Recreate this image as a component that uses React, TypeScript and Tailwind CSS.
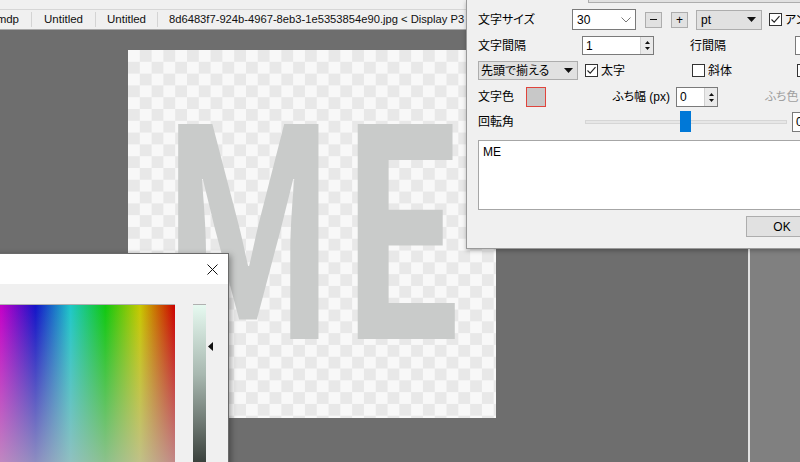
import React from "react";

const Check = ({ checked = false }: { checked?: boolean }) => (
  <div className="w-[13px] h-[13px] border border-[#333333] bg-white flex items-center justify-center shrink-0">
    {checked && (
      <svg width="11" height="11" viewBox="0 0 11 11">
        <path d="M1.5 5.5 L4.2 8.2 L9.5 2.2" fill="none" stroke="#222" strokeWidth="1.1" />
      </svg>
    )}
  </div>
);

const DownTri = () => (
  <svg width="9" height="5" viewBox="0 0 9 5" className="shrink-0">
    <polygon points="0,0 9,0 4.5,5" fill="#111" />
  </svg>
);

const Spin = ({ value, w }: { value: string; w: string }) => (
  <div className={`${w} h-full bg-white border border-[#7a7a7a] flex items-stretch shrink-0`}>
    <div className="flex-1 pl-[3px] flex items-center leading-none">{value}</div>
    <div className="w-[13px] bg-[#eaeaea] border-l border-[#d0d0d0] flex flex-col items-center justify-center gap-[3px]">
      <svg width="5" height="3" viewBox="0 0 5 3"><polygon points="0,3 5,3 2.5,0" fill="#111" /></svg>
      <svg width="5" height="3" viewBox="0 0 5 3"><polygon points="0,0 5,0 2.5,3" fill="#111" /></svg>
    </div>
  </div>
);

export default function App() {
  return (
    <div className="relative w-[800px] h-[462px] overflow-hidden bg-[#6e6e6e] text-[12px] text-black [font-family:'Liberation_Sans','Noto_Sans_CJK_JP',sans-serif] [font-feature-settings:'palt']">
      {/* top strip */}
      <div className="h-[10px] bg-[#f0f0f0] border-b border-[#d6d6d6]" />
      {/* tab bar */}
      <div className="h-[20px] bg-[#f0f0f0] border-b border-[#a9a9a9] flex items-stretch text-[11.5px] text-[#111]">
        <div className="w-[31px] shrink-0 flex items-center justify-end pr-[12px] overflow-hidden whitespace-nowrap">mdp</div>
        <div className="w-px my-[2px] bg-[#d4d4d4] shrink-0" />
        <div className="w-[63px] shrink-0 flex items-center justify-center whitespace-nowrap">Untitled</div>
        <div className="w-px my-[2px] bg-[#d4d4d4] shrink-0" />
        <div className="w-[61px] shrink-0 flex items-center justify-center whitespace-nowrap">Untitled</div>
        <div className="w-px my-[2px] bg-[#d4d4d4] shrink-0" />
        <div className="flex items-center pl-[11px] whitespace-nowrap text-[11.2px]">8d6483f7-924b-4967-8eb3-1e5353854e90.jpg &lt; Display P3</div>
      </div>

      {/* main area */}
      <div className="flex h-[432px]">
        <div className="w-[748px] shrink-0 pl-[128px] pt-[20px]">
          <div className="w-[368px] h-[368px] bg-[conic-gradient(#e8e8e8_25%,#f8f8f8_0_50%,#e8e8e8_0_75%,#f8f8f8_0)] bg-[length:23.6px_23.6px] flex items-center justify-center overflow-hidden">
            <div className="text-[290px] leading-none font-bold text-[#c9cbca] [font-family:'Noto_Sans_CJK_JP',sans-serif] scale-x-[0.72] tracking-[2px] translate-x-[2px] -translate-y-[21px] whitespace-nowrap">
              ME
            </div>
          </div>
        </div>
        <div className="w-[2px] shrink-0 bg-[#e2e2e2]" />
        <div className="flex-1 bg-[#808080]" />
      </div>

      {/* text settings dialog */}
      <div className="absolute left-[466px] top-0 w-[340px] h-[249px] bg-[#f0f0f0] border-l border-b border-[#9a9a9a] pl-[11px] shadow-[0_2px_4px_rgba(0,0,0,0.25)] whitespace-nowrap">
        <div className="h-[3px] ml-[110px] bg-[#e1e1e1] border-l border-b border-[#adadad]" />
        {/* row 1 */}
        <div className="mt-[6px] h-[21px] flex items-center">
          <div className="w-[94px] shrink-0">文字サイズ</div>
          <div className="w-[64px] h-[21px] bg-white border border-[#7a7a7a] flex items-center pl-[4px] pr-[4px] shrink-0">
            <span className="flex-1">30</span>
            <svg width="10" height="6" viewBox="0 0 10 6"><polyline points="0.5,0.5 5,5 9.5,0.5" fill="none" stroke="#777" strokeWidth="1" /></svg>
          </div>
          <div className="ml-[9px] w-[17px] h-[16px] bg-[#e1e1e1] border border-[#adadad] flex items-center justify-center shrink-0">
            <div className="w-[7px] h-px bg-[#111]" />
          </div>
          <div className="ml-[9px] w-[17px] h-[16px] bg-[#e1e1e1] border border-[#adadad] flex items-center justify-center shrink-0 leading-none text-[12px]">+</div>
          <div className="ml-[8px] w-[66px] h-[20px] bg-[#e1e1e1] border border-[#adadad] flex items-center pl-[4px] pr-[5px] shrink-0">
            <span className="flex-1">pt</span>
            <DownTri />
          </div>
          <div className="ml-[7px] shrink-0"><Check checked /></div>
          <span className="ml-[3px] shrink-0">アンチエイリアス</span>
        </div>
        {/* row 2 */}
        <div className="mt-[6px] h-[19px] flex items-center">
          <div className="w-[104px] shrink-0">文字間隔</div>
          <Spin value="1" w="w-[72px]" />
          <div className="ml-[36px] w-[105px] shrink-0">行間隔</div>
          <div className="w-[60px] h-[19px] bg-white border border-[#7a7a7a] shrink-0" />
        </div>
        {/* row 3 */}
        <div className="mt-[6px] h-[19px] flex items-center">
          <div className="w-[100px] h-[19px] bg-[#e1e1e1] border border-[#adadad] flex items-center pl-[2px] pr-[4px] shrink-0">
            <span className="flex-1">先頭で揃える</span>
            <DownTri />
          </div>
          <div className="ml-[7px] w-[107px] shrink-0 flex items-center gap-[3px]">
            <Check checked />
            <span>太字</span>
          </div>
          <div className="w-[105px] shrink-0 flex items-center gap-[3px]">
            <Check />
            <span>斜体</span>
          </div>
          <Check />
        </div>
        {/* row 4 */}
        <div className="mt-[7px] h-[20px] flex items-center">
          <div className="w-[48px] shrink-0">文字色</div>
          <div className="w-[20px] h-[20px] border border-[#e0443c] bg-[#c8c8c8] shrink-0" />
          <div className="w-[124px] shrink-0 text-right">ふち幅 (px)</div>
          <div className="ml-[6px] h-[20px] flex shrink-0"><Spin value="0" w="w-[42px]" /></div>
          <div className="ml-[47px] shrink-0 text-[#a0a0a0]">ふち色</div>
        </div>
        {/* row 5 */}
        <div className="mt-[4px] h-[22px] flex items-center">
          <div className="w-[107px] shrink-0">回転角</div>
          <div className="relative w-[202px] h-[22px] shrink-0 flex items-center">
            <div className="w-full h-[4px] bg-[#e7e7e7] border border-[#d6d6d6]" />
            <div className="absolute left-[95px] top-0 w-[11px] h-[21px] bg-[#0078d7]" />
          </div>
          <div className="ml-[5px] w-[40px] h-[20px] bg-white border border-[#7a7a7a] pl-[3px] flex items-center shrink-0">0</div>
        </div>
        {/* textarea */}
        <div className="mt-[7px] h-[70px] w-[340px] bg-white border border-[#a6a6a6] pl-[4px] pt-[3px] leading-[16px]">ME</div>
        {/* OK */}
        <div className="mt-[6px] ml-[268px] w-[72px] h-[21px] bg-[#e1e1e1] border border-[#adadad] flex items-center justify-center">OK</div>
      </div>

      {/* color picker window */}
      <div className="absolute left-[-60px] top-[253px] w-[289px] h-[230px] bg-[#f0f0f0] border border-[#6a6a6a] shadow-[2px_2px_6px_rgba(0,0,0,0.35)]">
        <div className="h-[30px] bg-white flex items-center justify-end pr-[10px]">
          <svg width="11" height="11" viewBox="0 0 11 11">
            <path d="M0.5 0.5 L10.5 10.5 M10.5 0.5 L0.5 10.5" stroke="#111" strokeWidth="1" />
          </svg>
        </div>
        <div className="pt-[20px] pl-[25px] flex">
          <div className="w-[209px] h-[200px] border-t border-[#b0b0b0] bg-[linear-gradient(to_bottom,rgba(190,190,190,0)_0%,rgba(190,190,190,0.72)_80%,rgba(190,190,190,0.8)_100%),linear-gradient(to_right,#cc0000_0%,#c400c8_16.7%,#1414c8_33.3%,#1ec8c8_50%,#10c810_66.7%,#c8c800_83.3%,#cc0000_100%)]" />
          <div className="relative ml-[18px] w-[13px] h-[200px] border-t border-[#b0b0b0] bg-[linear-gradient(to_bottom,#e6f9f0_0%,#a8b8b0_35%,#6c7670_60%,#2a302c_85%)]">
            <svg className="absolute left-[15px] top-[37px]" width="5" height="9" viewBox="0 0 5 9">
              <polygon points="5,0 0,4.5 5,9" fill="#111" />
            </svg>
          </div>
        </div>
      </div>
    </div>
  );
}
